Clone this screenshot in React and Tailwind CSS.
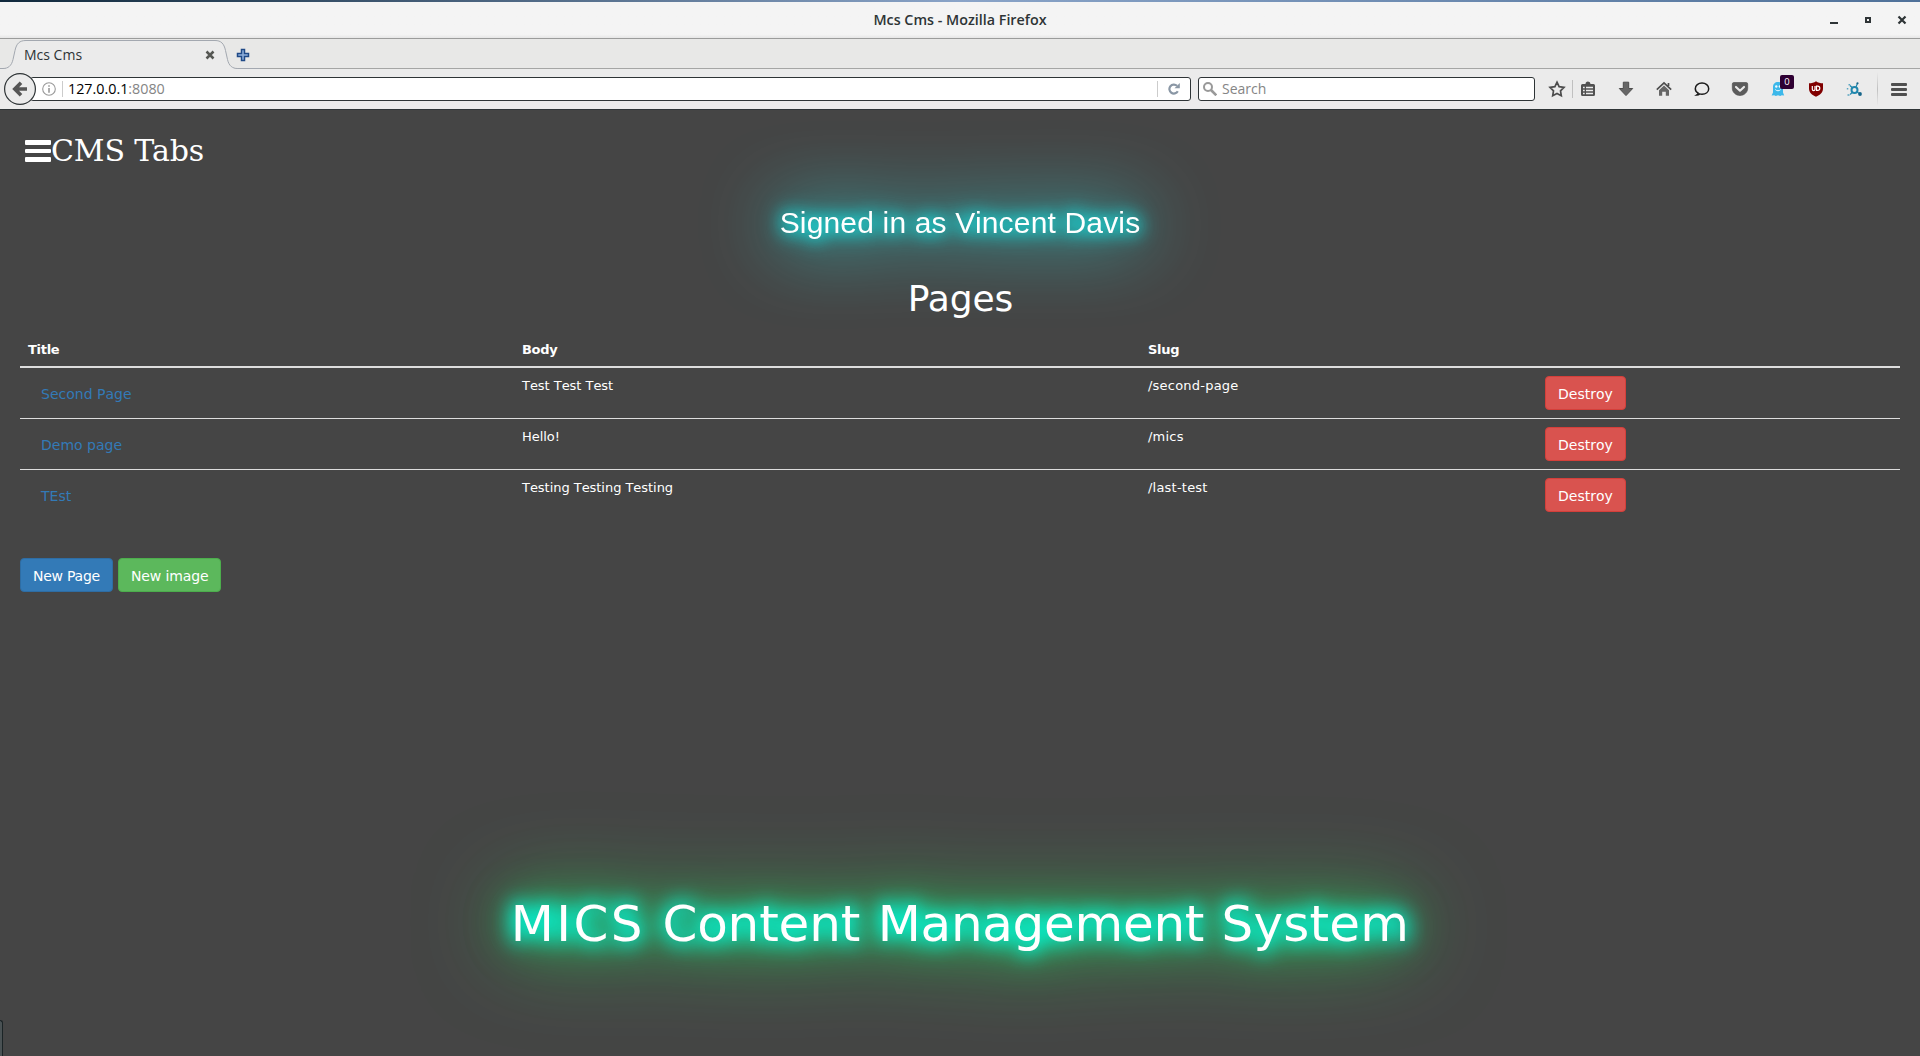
const rows = [
  { title: "Second Page", body: "Test Test Test", slug: "/second-page" },
  { title: "Demo page", body: "Hello!", slug: "/mics" },
  { title: "TEst", body: "Testing Testing Testing", slug: "/last-test" },
];

const COLS = "grid grid-cols-[494px_626px_397px_1fr]";

function TitleBar() {
  return (
    <div className="flex h-[37px] items-center justify-between border-b border-[#9b9c9b] bg-linear-to-b from-[#f4f4f4] from-90% to-[#e6e6e6] font-['Open_Sans','Noto_Sans',sans-serif]">
      <div className="w-[110px]" />
      <div className="pb-[1px] text-[14.3px] font-semibold text-[#2e3436]">Mcs Cms - Mozilla Firefox</div>
      <svg width="110" height="36" viewBox="1810 2 110 36" fill="none" stroke="#2e3436">
        <path d="M1830 23h8" strokeWidth="2" />
        <path d="M1866 18h4v4h-4z" strokeWidth="2" />
        <path d="M1898.500 16.500l7 7m0-7l-7 7" strokeWidth="2.200" />
      </svg>
    </div>
  );
}

function TabStrip() {
  return (
    <div className="relative flex h-[30px] bg-[#e8e8e7] font-['Open_Sans','Noto_Sans',sans-serif] shadow-[inset_0_-1px_0_#a5a6a5]">
      <svg className="absolute left-0 top-0" width="260" height="30" viewBox="0 39 260 30" fill="none">
        <path d="M0 68.500h3c5 0 8.500-2.500 10-9l2-9c1.500-7 4.500-10 11-10h189c6 0 9 3 10.500 10l2 9c1.500 6.500 5 9 10 9v1H0z" fill="#ebebeb" />
        <path d="M0 68.500h3c5 0 8.500-2.500 10-9l2-9c1.500-7 4.500-10 11-10h189c6 0 9 3 10.500 10l2 9c1.500 6.500 5 9 10 9H260" stroke="#a3a8b0" />
        <path d="M206.500 51.500l7 7m0-7l-7 7" stroke="#555753" strokeWidth="2.500" />
        <path d="M241.500 49.500h3v4h4v3h-4v4h-3v-4h-4v-3h4z" fill="#8fb0dc" stroke="#204a87" strokeWidth="1.500" />
      </svg>
      <div className="relative ml-6 pt-[6px] text-[14px] leading-[20px] text-[#2e3436]">Mcs Cms</div>
    </div>
  );
}

function Cell({ children, className = "w-[38px]" }) {
  return (
    <div className={`flex h-6 shrink-0 items-center justify-center ${className}`}>
      <svg width="18" height="18" viewBox="0 0 18 18" className="overflow-visible" fill="none">
        {children}
      </svg>
    </div>
  );
}

function NavBar() {
  return (
    <div className="flex h-[41px] items-center border-b border-[#2e3436] bg-[#ebebeb] font-['Open_Sans','Noto_Sans',sans-serif]">
      <svg className="relative z-10 ml-1 shrink-0" width="32" height="32" viewBox="0 0 32 32">
        <circle cx="16" cy="16" r="15.400" fill="#ebebeb" stroke="#2e3436" strokeWidth="1.200" />
        <path d="M23 16H11.500M17 9.800L10.800 16l6.200 6.200" fill="none" stroke="#555" strokeWidth="3.600" />
      </svg>
      <div className="-ml-[6px] flex h-6 w-[1161px] shrink-0 items-center rounded-[3px] border border-[#2e3436] bg-white">
        <svg className="ml-[11px]" width="14" height="14" viewBox="0 0 14 14" fill="none" stroke="#999">
          <circle cx="7" cy="7" r="6.300" strokeWidth="1.100" />
          <path d="M7 6v4.800M7 3.200v1.600" strokeWidth="1.600" />
        </svg>
        <div className="ml-[6px] h-4 w-px bg-[#ccc]" />
        <div className="ml-[5px] whitespace-pre text-[14.300px] leading-5 text-[#858585]"><span className="text-black">127.0.0.1</span>:8080</div>
        <div className="ml-auto h-4 w-px bg-[#ccc]" />
        <svg className="ml-[10px] mr-[10px]" width="12" height="12" viewBox="0 0 12 12" fill="none">
          <path d="M9.800 8.300A4.500 4.500 0 1 1 9 2.800" stroke="#8a97a5" strokeWidth="2.200" />
          <path d="M11.800 0v5.300H6.500z" fill="#8a97a5" />
        </svg>
      </div>
      <div className="ml-[7px] flex h-6 w-[337px] shrink-0 items-center rounded-[3px] border border-[#2e3436] bg-white">
        <svg className="ml-1" width="14" height="14" viewBox="0 0 14 14" fill="none" stroke="#999">
          <circle cx="5" cy="5" r="4" strokeWidth="2" />
          <path d="M8 8l5.300 5.300" strokeWidth="2.600" />
        </svg>
        <div className="ml-[5px] text-[14px] leading-5 text-[#858585]">Search</div>
      </div>

      <Cell className="ml-[6px] w-[31px]">
        <path d="M9 2.200l2.100 4.500 4.900.7-3.500 3.500.8 4.900L9 13.500l-4.300 2.300.8-4.900L2 7.400l4.900-.7z" stroke="#4d4d4d" strokeWidth="1.700" />
      </Cell>
      <div className="h-[18px] w-px bg-[#c0c0c0]" />
      <Cell className="w-[29px]">
        <path d="M3.500 4h3a2.500 2.500 0 0 1 5 0h3A1.500 1.500 0 0 1 16 5.500v9a1.500 1.500 0 0 1-1.500 1.500h-11A1.500 1.500 0 0 1 2 14.500v-9A1.500 1.500 0 0 1 3.500 4z" fill="#505050" />
        <path d="M4 7.500h1.700m1.300 0h7M4 10.500h1.700m1.300 0h7M4 13.500h1.700m1.300 0h7" stroke="#ebebeb" strokeWidth="1.500" />
      </Cell>
      <Cell className="ml-[5px] w-[38px]">
        <path d="M6.300 2.200h5.400v6.300h4L9 15.600 2.300 8.500h4z" fill="#666" stroke="#4d4d4d" />
      </Cell>
      <Cell>
        <path d="M4 10.200L9 5.600l5 4.600v5.500h-3.200v-4H7.200v4H4z" fill="#666" />
        <path d="M1.800 9.600L9 2.900l7.200 6.700M13.500 3v3" stroke="#4d4d4d" strokeWidth="1.700" />
      </Cell>
      <Cell>
        <path d="M5.200 13.200C3.200 12 2.300 10.500 2.300 8.700 2.300 5.400 5.300 3 9 3s6.700 2.400 6.700 5.700-3 5.500-6.700 5.500c-.9 0-1.700-.1-2.400-.3-.8.900-1.700 1.200-3 1.200.9-.6 1.500-1.200 1.600-1.900z" stroke="#1a1a1a" strokeWidth="1.500" />
      </Cell>
      <Cell>
        <path d="M1.300 4a1.500 1.500 0 0 1 1.500-1.500h12.400A1.500 1.500 0 0 1 16.700 4v4.300c0 4-3.500 7.200-7.700 7.200s-7.700-3.200-7.700-7.200z" fill="#5c5c5c" stroke="#4a4a4a" strokeWidth=".6" />
        <path d="M5 7l4 3.700L13 7" stroke="#ebebeb" strokeWidth="2.200" strokeLinecap="round" strokeLinejoin="round" />
      </Cell>
      <div className="relative">
        <Cell>
          <path d="M4 7C4 4 6 2 9 2s5 2 5 5v5.500l1.200 3-2.400-.3-1.600.8-2.200-.8-2.200.8-1.600-.8-2.600.3 1.400-3z" fill="#3cb8ea" />
          <circle cx="7.300" cy="6.500" r="1.200" fill="#f0faff" />
          <circle cx="10.900" cy="6.500" r="1.200" fill="#f0faff" />
          <path d="M6.300 9.500c1.400 1.700 4 1.700 5.400 0" stroke="#f0faff" />
        </Cell>
        <div className="absolute left-[21px] -top-[2px] flex h-[14px] w-[14px] items-center justify-center rounded-[2px] bg-[#2f0033] text-[9.500px] leading-none text-white">0</div>
      </div>
      <Cell>
        <path d="M9 1.200c2 1.500 4.300 2.100 7 2.100v5.200c0 4-3 6.500-7 8.300-4-1.800-7-4.300-7-8.300V3.300c2.700 0 5-.6 7-2.100z" fill="#800000" />
        <path d="M5.300 6v3.200a1.300 1.300 0 0 0 2.700 0V6M9.500 6.200v4.200h1.200a2.100 2.100 0 0 0 0-4.200z" stroke="#fff" strokeWidth="1.200" />
      </Cell>
      <Cell>
        <circle cx="9.500" cy="10" r="3" stroke="#2087ad" strokeWidth="2" />
        <path d="M11 7l1.400-3.600M12 12l2.500 1.600M5 5.500l2 2M7 12.500l-1.800 2" stroke="#2087ad" strokeWidth="1.200" />
        <circle cx="12.500" cy="3.300" r="1.100" fill="#17668a" />
        <circle cx="15" cy="14" r="1.900" fill="#17668a" />
        <path d="M3.500 4.700h1.700M1.800 8.700h1.500M2.500 15h2" stroke="#5aa6c2" strokeWidth="1.500" />
      </Cell>
      <div className="ml-[4px] h-[34px] w-px bg-linear-to-b from-[#ebebeb] via-[#c0c0c0] to-[#ebebeb]" />
      <div className="ml-[13px] flex w-4 shrink-0 flex-col gap-[2px]">
        <div className="h-[3px] rounded-[1px] bg-[#4f4f4f]" />
        <div className="h-[3px] rounded-[1px] bg-[#4f4f4f]" />
        <div className="h-[3px] rounded-[1px] bg-[#4f4f4f]" />
      </div>
    </div>
  );
}

function Button({ children, className }) {
  return (
    <button className={`flex h-[34px] items-center rounded-[4px] border px-3 pt-[2px] text-[14px] leading-[20px] whitespace-nowrap ${className}`}>
      {children}
    </button>
  );
}

export default function App() {
  return (
    <div className="flex h-[1056px] w-[1920px] flex-col overflow-hidden bg-[#454545] font-['DejaVu_Sans',sans-serif] text-[13px] text-white">
      <div className="h-[2px] shrink-0 bg-linear-to-r from-[#10293c] via-[#8aa4c8] via-50% to-[#4f7199]" />
      <TitleBar />
      <TabStrip />
      <NavBar />
      <main className="relative flex flex-1 flex-col px-5">
        <div className="mt-[21px] flex h-10 items-center pl-[5px]">
          <div className="flex w-[26px] flex-col gap-[4px]">
            <div className="h-[4.500px] rounded-[1px] bg-white" />
            <div className="h-[4.500px] rounded-[1px] bg-white" />
            <div className="h-[4.500px] rounded-[1px] bg-white" />
          </div>
          <div className="font-['DejaVu_Serif',serif] text-[30px] leading-10 tracking-[-0.1px]">CMS Tabs</div>
        </div>
        <div className="mt-[32px] h-10 text-center font-['Liberation_Sans',Arial,sans-serif] text-[30px] leading-10 tracking-[0.170px] [filter:drop-shadow(0_0_8px_#10eaea)_drop-shadow(0_0_9px_#10eaea)_drop-shadow(0_0_38px_#30ffff)]">
          Signed in as Vincent Davis
        </div>
        <h1 className="relative mt-[36px] h-10 pl-[1px] text-center text-[36px] leading-10 tracking-[-0.1px]">Pages</h1>

        <div className="mt-[21px] h-[28px] border-b-2 border-[#ddd]">
          <div className={`${COLS} font-bold leading-[19px] tracking-[-0.300px]`}>
            <div className="px-2">Title</div>
            <div className="px-2">Body</div>
            <div className="px-2">Slug</div>
          </div>
        </div>
        {rows.map((r, i) => (
          <div
            key={r.slug}
            className={`${COLS} h-[51px] items-start pt-2 leading-[19px] [font-kerning:none] ${i < rows.length - 1 ? "border-b border-[#ddd]" : ""}`}
          >
            <div className="px-2">
              <Button className="border-transparent text-[#337ab7]">{r.title}</Button>
            </div>
            <div className="px-2 tracking-[-0.040px]">{r.body}</div>
            <div className="px-2 tracking-[0.220px]">{r.slug}</div>
            <div className="px-2">
              <Button className="border-[#d43f3a] bg-[#d9534f]">Destroy</Button>
            </div>
          </div>
        ))}
        <div className="mt-[37px] flex gap-[5px]">
          <Button className="border-[#2e6da4] bg-[#337ab7] tracking-[-0.240px]">New Page</Button>
          <Button className="border-[#4cae4c] bg-[#5cb85c] tracking-[-0.120px]">New image</Button>
        </div>
        <footer className="mt-[296px] flex h-[70px] justify-center gap-[17.500px] pt-[1px] text-[50px] leading-[70px] tracking-[-0.150px] [filter:drop-shadow(0_0_10px_#00ffe0)_drop-shadow(0_0_9px_#00ffe0)_drop-shadow(0_0_20px_#10ff6070)_drop-shadow(0_0_42px_#30ff6090)]">
          <span className="tracking-[2.400px]">MICS</span> <span>Content</span> <span className="tracking-[-0.300px]">Management</span> <span className="tracking-[0.200px]">System</span>
        </footer>
        <div className="absolute bottom-0 left-0 h-9 w-[3px] rounded-tr-[3px] border-r border-t border-[#1b2426] bg-[#4a5254]" />
      </main>
    </div>
  );
}
